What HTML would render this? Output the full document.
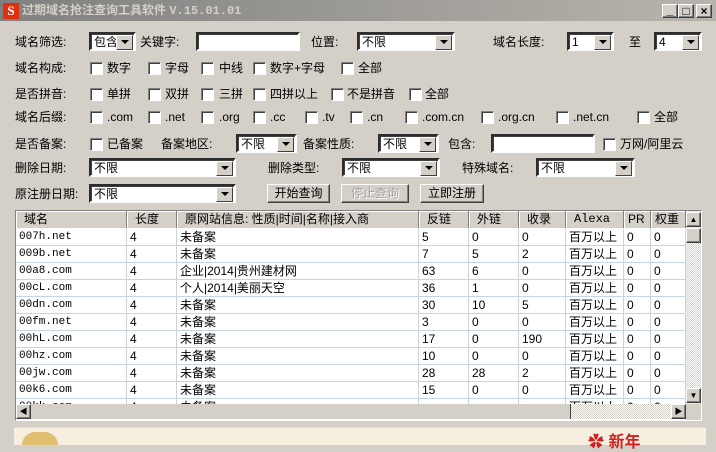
<!DOCTYPE html>
<html><head><meta charset="utf-8"><style>
*{box-sizing:border-box;margin:0;padding:0}
body{width:716px;height:445px;background:#d4d0c8;font:12px "Liberation Sans","Noto Sans CJK SC",sans-serif;color:#000;position:relative;overflow:hidden}
.a{position:absolute;white-space:nowrap}
.t{position:absolute;white-space:nowrap;line-height:14px}
.sel{position:absolute;height:19px;background:#fff;border:2px inset #888;border-color:#808080 #fff #fff #808080;box-shadow:inset 1px 1px #404040;padding:1px 3px;line-height:14px}
.sel:after{content:"";position:absolute;right:1px;top:1px;width:15px;height:13px;background:#d4d0c8;border:1px solid;border-color:#fff #404040 #404040 #fff}
.sel:before{content:"";position:absolute;right:5px;top:6px;border:4px solid transparent;border-top:4px solid #000;border-bottom:0;z-index:2}
.inp{position:absolute;height:19px;background:#fff;border:2px inset;border-color:#808080 #fff #fff #808080;box-shadow:inset 1px 1px #404040}
.cb{position:absolute;width:13px;height:13px;background:#fff;border:1px solid;border-color:#808080 #fff #fff #808080;box-shadow:inset 1px 1px #404040}
.btn{position:absolute;height:19px;border:1px solid;border-color:#fff #404040 #404040 #fff;box-shadow:inset -1px -1px #808080;text-align:center;line-height:16px}
.grid{position:absolute;left:15px;top:210px;width:687px;height:211px;background:#fff;border:1px solid;border-color:#808080 #fff #fff #808080;overflow:hidden}
.row{position:absolute;left:0;height:17px;width:670px;border-bottom:1px solid #c8d4e4}
.c{position:absolute;top:0;height:17px;line-height:17px;padding-left:3px;border-right:1px solid #c8d4e4}
.hd .c{background:#d4d0c8;border-right:1px solid #808080;box-shadow:inset 1px 1px #fff;line-height:16px;padding-left:8px}
</style></head><body>
<div class="a" style="left:0;top:0;width:716px;height:21px;background:linear-gradient(90deg,#808080,#b8b4ac)"></div>
<div class="a" style="left:3px;top:3px;width:16px;height:16px;background:#e03010;color:#fff;font:bold 13px 'Liberation Serif';line-height:16px;text-align:center">S</div>
<div class="a" style="left:22px;top:3px;color:#d4d0c8;font-weight:bold;font-size:12px;line-height:15px">过期域名抢注查询工具软件 <span style="font-family:'Liberation Mono'">V.15.01.01</span></div>
<div class="btn" style="left:662px;top:4px;width:16px;height:14px;background:#d4d0c8;line-height:10px;font-weight:bold">_</div>
<div class="btn" style="left:678px;top:4px;width:16px;height:14px;background:#d4d0c8;line-height:12px">□</div>
<div class="btn" style="left:696px;top:4px;width:16px;height:14px;background:#d4d0c8;line-height:12px;font-weight:bold">×</div>

<div class="t" style="left:15px;top:35px">域名筛选:</div>
<div class="sel" style="left:89px;top:32px;width:47px">包含</div>
<div class="t" style="left:140px;top:35px">关键字:</div>
<div class="inp" style="left:196px;top:32px;width:104px"></div>
<div class="t" style="left:311px;top:35px">位置:</div>
<div class="sel" style="left:357px;top:32px;width:98px">不限</div>
<div class="t" style="left:493px;top:35px">域名长度:</div>
<div class="sel" style="left:567px;top:32px;width:47px">1</div>
<div class="t" style="left:629px;top:35px">至</div>
<div class="sel" style="left:654px;top:32px;width:48px">4</div>

<div class="t" style="left:15px;top:61px">域名构成:</div>
<div class="cb" style="left:90px;top:62px"></div><div class="t" style="left:107px;top:61px">数字</div>
<div class="cb" style="left:148px;top:62px"></div><div class="t" style="left:165px;top:61px">字母</div>
<div class="cb" style="left:201px;top:62px"></div><div class="t" style="left:219px;top:61px">中线</div>
<div class="cb" style="left:253px;top:62px"></div><div class="t" style="left:270px;top:61px">数字+字母</div>
<div class="cb" style="left:341px;top:62px"></div><div class="t" style="left:358px;top:61px">全部</div>

<div class="t" style="left:15px;top:87px">是否拼音:</div>
<div class="cb" style="left:90px;top:88px"></div><div class="t" style="left:107px;top:87px">单拼</div>
<div class="cb" style="left:148px;top:88px"></div><div class="t" style="left:165px;top:87px">双拼</div>
<div class="cb" style="left:201px;top:88px"></div><div class="t" style="left:219px;top:87px">三拼</div>
<div class="cb" style="left:253px;top:88px"></div><div class="t" style="left:270px;top:87px">四拼以上</div>
<div class="cb" style="left:331px;top:88px"></div><div class="t" style="left:347px;top:87px">不是拼音</div>
<div class="cb" style="left:409px;top:88px"></div><div class="t" style="left:425px;top:87px">全部</div>

<div class="t" style="left:15px;top:110px">域名后缀:</div>
<div class="cb" style="left:90px;top:111px"></div><div class="t" style="left:107px;top:110px">.com</div>
<div class="cb" style="left:148px;top:111px"></div><div class="t" style="left:165px;top:110px">.net</div>
<div class="cb" style="left:201px;top:111px"></div><div class="t" style="left:219px;top:110px">.org</div>
<div class="cb" style="left:253px;top:111px"></div><div class="t" style="left:270px;top:110px">.cc</div>
<div class="cb" style="left:305px;top:111px"></div><div class="t" style="left:322px;top:110px">.tv</div>
<div class="cb" style="left:350px;top:111px"></div><div class="t" style="left:367px;top:110px">.cn</div>
<div class="cb" style="left:405px;top:111px"></div><div class="t" style="left:422px;top:110px">.com.cn</div>
<div class="cb" style="left:481px;top:111px"></div><div class="t" style="left:498px;top:110px">.org.cn</div>
<div class="cb" style="left:556px;top:111px"></div><div class="t" style="left:573px;top:110px">.net.cn</div>
<div class="cb" style="left:637px;top:111px"></div><div class="t" style="left:654px;top:110px">全部</div>

<div class="t" style="left:15px;top:137px">是否备案:</div>
<div class="cb" style="left:90px;top:138px"></div><div class="t" style="left:107px;top:137px">已备案</div>
<div class="t" style="left:161px;top:137px">备案地区:</div>
<div class="sel" style="left:236px;top:134px;width:61px">不限</div>
<div class="t" style="left:303px;top:137px">备案性质:</div>
<div class="sel" style="left:378px;top:134px;width:61px">不限</div>
<div class="t" style="left:448px;top:137px">包含:</div>
<div class="inp" style="left:491px;top:134px;width:104px"></div>
<div class="cb" style="left:603px;top:138px"></div><div class="t" style="left:620px;top:137px">万网/阿里云</div>

<div class="t" style="left:15px;top:161px">删除日期:</div>
<div class="sel" style="left:89px;top:158px;width:147px">不限</div>
<div class="t" style="left:268px;top:161px">删除类型:</div>
<div class="sel" style="left:342px;top:158px;width:98px">不限</div>
<div class="t" style="left:462px;top:161px">特殊域名:</div>
<div class="sel" style="left:536px;top:158px;width:99px">不限</div>

<div class="t" style="left:15px;top:187px">原注册日期:</div>
<div class="sel" style="left:89px;top:184px;width:147px">不限</div>
<div class="btn" style="left:267px;top:184px;width:63px">开始查询</div>
<div class="btn" style="left:341px;top:184px;width:68px;color:#a0a0a0;text-shadow:1px 1px #fff">停止查询</div>
<div class="btn" style="left:420px;top:184px;width:64px">立即注册</div>

<div class="grid">
<div class="row hd" style="top:0;height:18px;border:0">
<div class="c" style="left:0;width:111px">域名</div><div class="c" style="left:111px;width:50px">长度</div><div class="c" style="left:161px;width:242px">原网站信息: 性质|时间|名称|接入商</div><div class="c" style="left:403px;width:50px">反链</div><div class="c" style="left:453px;width:50px">外链</div><div class="c" style="left:503px;width:47px">收录</div><div class="c" style="left:550px;width:58px;font-family:'Liberation Mono'">Alexa</div><div class="c" style="left:608px;width:27px;padding-left:4px">PR</div><div class="c" style="left:635px;width:35px;padding-left:4px;overflow:hidden">权重</div>
</div>
<div id="rows"></div>
<div class="a" style="left:670px;top:0;width:15px;height:193px;background:repeating-conic-gradient(#fff 0 25%,#d4d0c8 0 50%) 0 0/2px 2px"></div>
<div class="btn" style="left:670px;top:1px;width:15px;height:15px;background:#d4d0c8;font-size:8px;line-height:13px">▲</div>
<div class="btn" style="left:670px;top:17px;width:15px;height:15px;background:#d4d0c8"></div>
<div class="btn" style="left:670px;top:177px;width:15px;height:15px;background:#d4d0c8;font-size:8px;line-height:13px">▼</div>
<div class="a" style="left:0;top:193px;width:670px;height:15px;background:repeating-conic-gradient(#fff 0 25%,#d4d0c8 0 50%) 0 0/2px 2px"></div>
<div class="a" style="left:15px;top:193px;width:540px;height:15px;background:#d4d0c8;border-right:1px solid #404040"></div>
<div class="btn" style="left:0;top:193px;width:15px;height:15px;background:#d4d0c8;font-size:8px;line-height:13px">◀</div>
<div class="btn" style="left:655px;top:193px;width:15px;height:15px;background:#d4d0c8;font-size:8px;line-height:13px">▶</div>
<div class="a" style="left:670px;top:193px;width:17px;height:18px;background:#d4d0c8"></div>
</div>
<div class="a" style="left:14px;top:427px;width:692px;height:18px;background:#f6efe0;border-top:1px solid #e8dcc0"></div>
<div class="a" style="left:22px;top:432px;width:36px;height:13px;background:#e0c070;border-radius:18px 18px 0 0"></div>
<div class="a" style="left:588px;top:428px;color:#d02020;font-size:16px;font-weight:bold">✿ 新年</div>
<script>
var d=[["007h.net","未备案",5,0,0],["009b.net","未备案",7,5,2],["00a8.com","企业|2014|贵州建材网",63,6,0],["00cL.com","个人|2014|美丽天空",36,1,0],["00dn.com","未备案",30,10,5],["00fm.net","未备案",3,0,0],["00hL.com","未备案",17,0,190],["00hz.com","未备案",10,0,0],["00jw.com","未备案",28,28,2],["00k6.com","未备案",15,0,0],["00kk.com","未备案","","",""]];
var h="";d.forEach(function(r,i){h+='<div class="row" style="top:'+(18+i*17)+'px"><div class="c" style="left:0;width:111px;font-family:\'Liberation Mono\';font-size:11px">'+r[0]+'</div><div class="c" style="left:111px;width:50px">4</div><div class="c" style="left:161px;width:242px">'+r[1]+'</div><div class="c" style="left:403px;width:50px">'+r[2]+'</div><div class="c" style="left:453px;width:50px">'+r[3]+'</div><div class="c" style="left:503px;width:47px">'+r[4]+'</div><div class="c" style="left:550px;width:58px">百万以上</div><div class="c" style="left:608px;width:27px">0</div><div class="c" style="left:635px;width:35px">0</div></div>'});
document.getElementById("rows").innerHTML=h;
</script>
</body></html>
